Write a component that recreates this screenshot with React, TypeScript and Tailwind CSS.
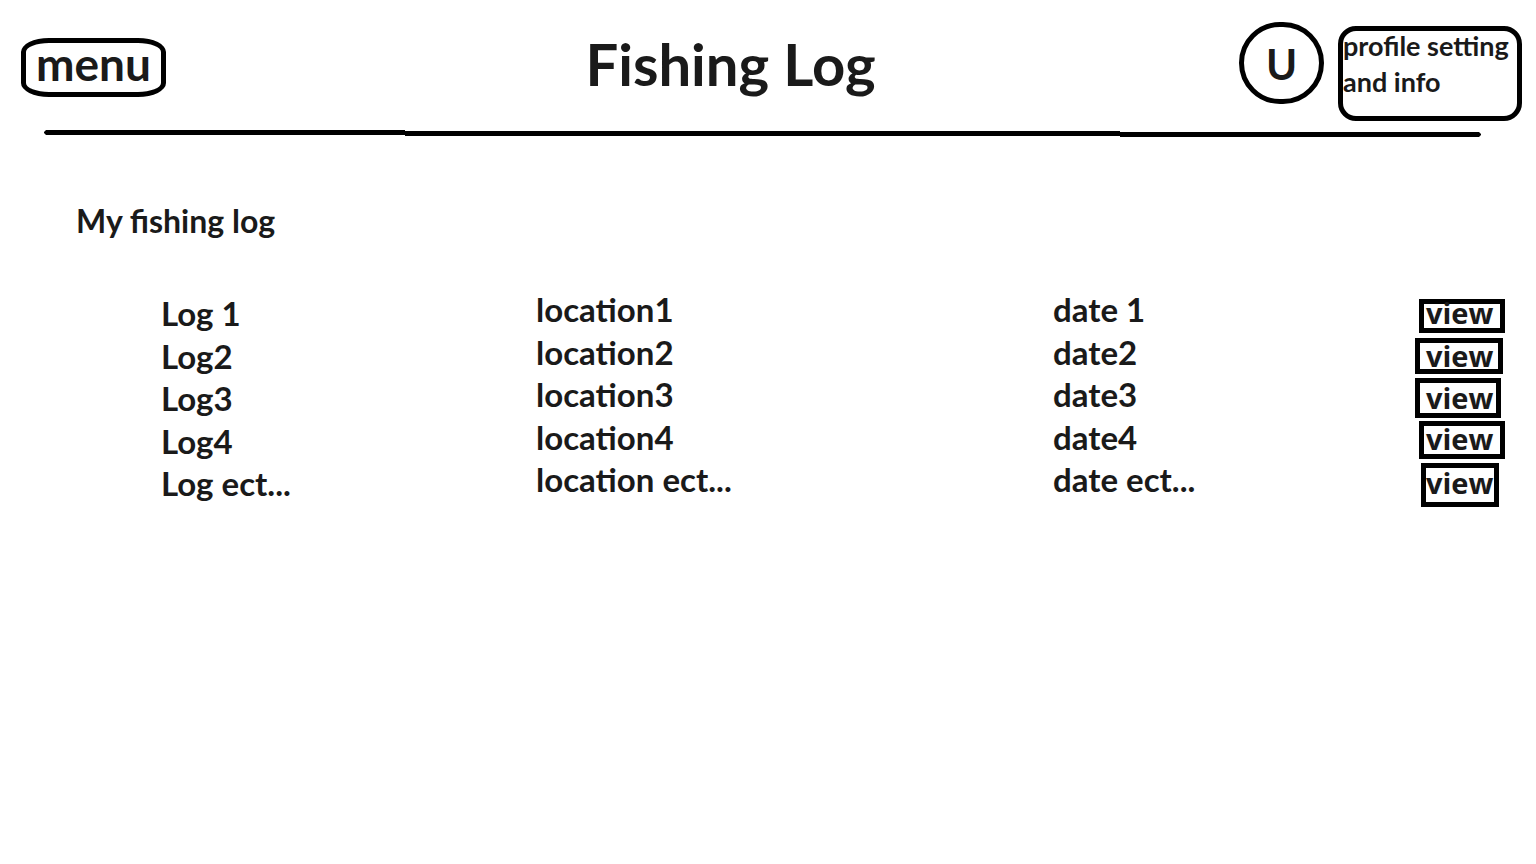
const rows = [
  { log: "Log 1", location: "location1", date: "date 1", box: "mt-[7px] ml-1 h-[34px] w-[86px] pl-0.5" },
  { log: "Log2", location: "location2", date: "date2", box: "mt-[3px] h-9 w-[88px] pt-1 pl-1.5" },
  { log: "Log3", location: "location3", date: "date3", box: "mt-px h-10 w-[86px] pt-1.5 pl-1.5" },
  { log: "Log4", location: "location4", date: "date4", box: "mt-px ml-1 h-[38px] w-[86px] pt-1 pl-0.5" },
  { log: "Log ect...", location: "location ect...", date: "date ect...", box: "mt-px ml-1.5 h-11 w-[78px] pt-1.5" },
];

function Divider() {
  return (
    <svg
      className="block h-[7px] w-full"
      viewBox="0 0 1437 7"
      preserveAspectRatio="none"
      fill="#000"
      aria-hidden="true"
    >
      <path d="M2 0H361V1H1076V2H1435L1437 4V5L1435 7H1076V6H361V5H2L0 3V2Z" />
    </svg>
  );
}

export default function App() {
  return (
    <div className="min-h-screen bg-white font-['Lato','Open_Sans',sans-serif] font-bold text-[#1a1a1a]">
      <header className="flex items-start justify-between pt-[22px] pr-[14px] pl-[21px]">
        <button className="mt-4 flex h-[59px] w-[145px] items-center justify-center rounded-[28px/14px] border-5 border-black pb-2 text-[46px]">
          menu
        </button>
        <h1 className="mt-1 ml-14 text-[58px] leading-[76px]">Fishing Log</h1>
        <div className="flex items-start gap-[14px]">
          <button className="flex h-[82px] w-[85px] items-center justify-center rounded-full border-5 border-black pt-0.5 text-[42px]">
            U
          </button>
          <a href="#profile" className="mt-1 h-[95px] w-[184px] rounded-[18px] border-5 border-black text-[27px] leading-9">
            <span className="-mt-[3px] block">profile setting and info</span>
          </a>
        </div>
      </header>
      <div className="mt-[9px] mr-[55px] ml-11">
        <Divider />
      </div>
      <main>
        <h2 className="mt-[63px] ml-[76px] text-[32px] leading-[42px]">My fishing log</h2>
        <table className="mt-[50px] w-full table-fixed text-left text-[33px] leading-[34px]">
          <tbody>
            {rows.map((row) => (
              <tr key={row.log} className="h-[42px] align-top odd:h-[43px]">
                <td className="w-[536px] pt-1 pl-[161px]">{row.log}</td>
                <td className="w-[517px]">{row.location}</td>
                <td>{row.date}</td>
                <td className="w-[121px]">
                  <button
                    className={`flex items-start border-5 border-black font-['Open_Sans','Noto_Sans',sans-serif] text-[29px] leading-[18px] ${row.box}`}
                  >
                    view
                  </button>
                </td>
              </tr>
            ))}
          </tbody>
        </table>
      </main>
    </div>
  );
}
